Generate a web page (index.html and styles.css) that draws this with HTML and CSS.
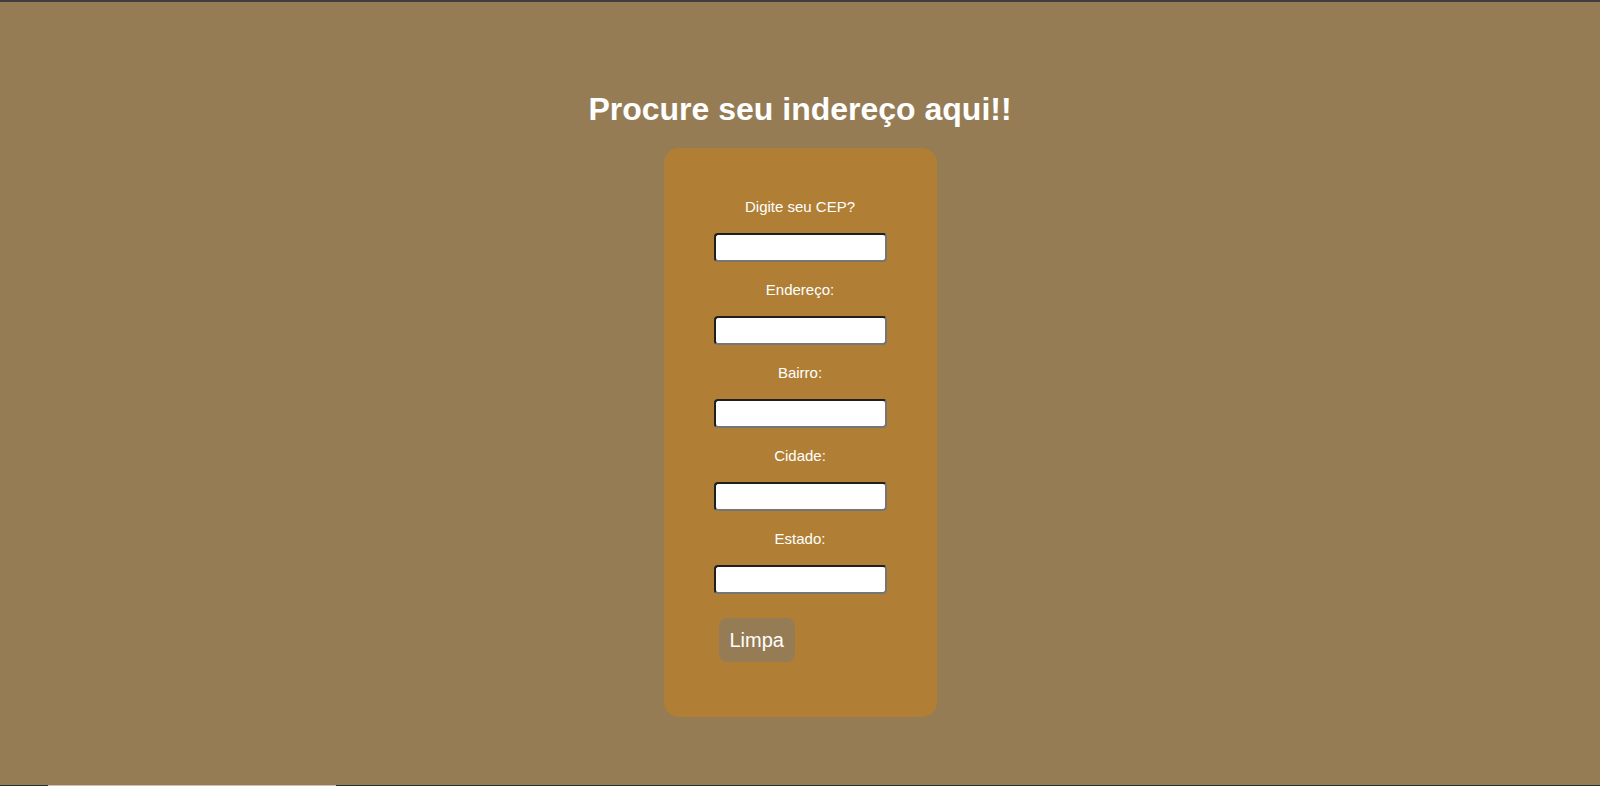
FILE: index.html
```html
<!DOCTYPE html>
<html lang="pt-BR">
<head>
<meta charset="utf-8">
<title>Procure seu indereço</title>
<link rel="stylesheet" href="styles.css">
</head>
<body>
<main class="page">
  <h1 class="title">Procure seu indereço aqui!!</h1>
  <form class="card">
    <label class="field-label" for="cep">Digite seu CEP?</label>
    <input class="field-input" type="text" id="cep">
    <label class="field-label" for="endereco">Endereço:</label>
    <input class="field-input" type="text" id="endereco">
    <label class="field-label" for="bairro">Bairro:</label>
    <input class="field-input" type="text" id="bairro">
    <label class="field-label" for="cidade">Cidade:</label>
    <input class="field-input" type="text" id="cidade">
    <label class="field-label" for="estado">Estado:</label>
    <input class="field-input" type="text" id="estado">
    <button class="btn-clear" type="reset">Limpa</button>
  </form>
</main>
<div class="bottom-edge">
  <span class="edge-dark edge-left"></span>
  <span class="edge-light"></span>
  <span class="edge-dark edge-rest"></span>
</div>
</body>
</html>
```

FILE: styles.css
```css
html {
  background: #967c54;
}

body {
  margin: 0;
  min-height: 784px;
  border-top: 2px solid #3e3e3e;
  background: #967c54;
  font-family: "Liberation Sans", Arial, sans-serif;
  color: #ffffff;
}

.page {
  display: flex;
  flex-direction: column;
  align-items: center;
  padding-top: 89px;
}

.title {
  margin: 0;
  font-size: 32px;
  font-weight: bold;
  line-height: 37px;
  color: #ffffff;
}

.card {
  margin-top: 20px;
  width: 273px;
  box-sizing: border-box;
  padding: 50px 50px 55px 50px;
  background: #b07f35;
  border-radius: 15px;
  display: flex;
  flex-direction: column;
  align-items: center;
}

.field-label {
  font-size: 15px;
  line-height: 17px;
  color: #ffffff;
  margin-bottom: 18px;
}

.field-input {
  width: 173px;
  height: 29px;
  box-sizing: border-box;
  margin: 0 0 19px 0;
  padding: 2px 4px;
  border-width: 2px;
  border-style: solid;
  border-color: #1f1f1f #767676 #767676 #1f1f1f;
  border-radius: 4px;
  background: #ffffff;
  font-family: "Liberation Sans", Arial, sans-serif;
  font-size: 13px;
}

.field-input:last-of-type {
  margin-bottom: 24px;
}

.btn-clear {
  align-self: flex-start;
  margin-left: 5px;
  padding: 10px 11px;
  border: none;
  border-radius: 8px;
  background: #967c54;
  color: #ffffff;
  font-family: "Liberation Sans", Arial, sans-serif;
  font-size: 20px;
  line-height: 24px;
}

.bottom-edge {
  position: fixed;
  left: 0;
  right: 0;
  bottom: 0;
  height: 1px;
  display: flex;
}

.edge-dark {
  background: #1f3338;
}

.edge-left {
  width: 48px;
}

.edge-light {
  width: 288px;
  background: #c9c1b1;
}

.edge-rest {
  flex: 1;
}
```
